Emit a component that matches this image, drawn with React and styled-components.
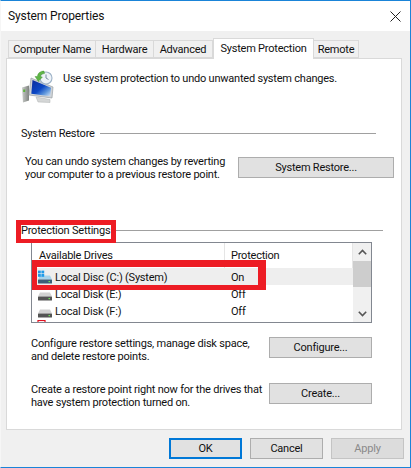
import React from 'react'
import styled, { createGlobalStyle } from 'styled-components'

const Global = createGlobalStyle`
  html, body { margin: 0; padding: 0; background: #fff; }
  * { box-sizing: border-box; }
  body { font-family: Roboto, "Open Sans", "Liberation Sans", sans-serif; font-size: 11px; letter-spacing: -0.22px; color: #111; }
`

const Window = styled.div`
  position: relative;
  width: 411px;
  height: 468px;
  border: 1px solid #1a84d8;
  border-left-color: #f6f6f6;
  display: flex;
  flex-direction: column;
  background: #f0f0f0;
  overflow: hidden;
`

const TitleBar = styled.div`
  height: 30px;
  flex: none;
  background: #fff;
  display: flex;
  align-items: center;
  justify-content: space-between;
  padding: 0 9px 0 7px;
  font-size: 12px;
  letter-spacing: -0.1px;
`

const TabStrip = styled.div`
  display: flex;
  align-items: flex-end;
  height: 27px;
  flex: none;
  padding-left: 7px;
  position: relative;
  z-index: 1;
`

const Tab = styled.div`
  height: ${p => (p.$active ? '21px' : '18px')};
  width: ${p => p.$w}px;
  margin-bottom: ${p => (p.$active ? '-1px' : '0')};
  padding-bottom: ${p => (p.$active ? '2px' : '0')};
  background: ${p => (p.$active ? '#fff' : '#f0f0f0')};
  border: 1px solid #d9d9d9;
  border-bottom: ${p => (p.$active ? 'none' : '1px solid #d9d9d9')};
  border-left-width: ${p => (p.$first || p.$active ? '1px' : '0')};
  display: flex;
  align-items: center;
  justify-content: center;
  white-space: nowrap;
`

const Panel = styled.div`
  width: 396px;
  height: 372px;
  flex: none;
  margin-left: 5px;
  background: #fff;
  border: 1px solid #d9d9d9;
  padding: 11px 0 0 14px;
`

const Intro = styled.div`
  display: flex;
  align-items: flex-start;
  gap: 4px;
  height: 55px;
  margin-left: -4px;
`

const IntroText = styled.div`
  padding-top: 1px;
  line-height: 16px;
`

const Legend = styled.div`
  display: flex;
  align-items: center;
  gap: 5px;
  width: ${p => p.$w}px;
  height: 16px;
  margin-top: ${p => p.$top || 0}px;
  white-space: nowrap;
  &::after {
    content: "";
    flex: 1;
    height: 1px;
    background: #a0a0a0;
  }
`

const ActionRow = styled.div`
  display: flex;
  align-items: flex-start;
  justify-content: space-between;
  width: ${p => p.$w}px;
  margin-top: ${p => p.$top}px;
  padding-left: ${p => p.$pad || 0}px;
`

const Copy = styled.div`
  line-height: 13px;
  margin-top: ${p => p.$top || 0}px;
  white-space: nowrap;
`

const Button = styled.div`
  width: ${p => p.$w || 73}px;
  height: 21px;
  flex: none;
  background-color: #e1e1e1;
  border: 1px solid ${p => (p.$primary ? '#0078d7' : '#adadad')};
  box-shadow: ${p => (p.$primary ? 'inset 0 0 0 1px #0078d7' : 'none')};
  color: ${p => (p.$disabled ? '#8a8a8a' : '#111')};
  display: flex;
  align-items: center;
  justify-content: center;
  white-space: nowrap;
  ${p => p.$disabled && `
    background-color: #dcdcdc;
    border-color: #c4c4c4;
    background-image: radial-gradient(#c6c6c6 0.6px, transparent 0.7px);
    background-size: 4px 4px;
  `}
`

const ListBox = styled.div`
  width: 341px;
  height: 81px;
  margin: 4px 0 0 10px;
  border: 1px solid #828790;
  display: flex;
  overflow: hidden;
  background: #fff;
`

const ListMain = styled.div`
  width: 321px;
  flex: none;
  overflow: hidden;
`

const Row = styled.div`
  display: grid;
  grid-template-columns: 192px 1fr;
  height: 17px;
  padding-top: 1px;
  align-items: center;
  background: ${p => (p.$selected ? '#eeeeee' : 'transparent')};
`

const HeaderRow = styled(Row)`
  height: 25px;
  padding-top: 0;
  align-items: start;
  border-right: 1px solid #e5e5e5;
`

const HeadCell = styled.div`
  height: 16px;
  padding: 5px 0 0 ${p => p.$pad}px;
  line-height: 16px;
  ${p => p.$divider && 'border-left: 1px solid #e5e5e5; height: 25px;'}
`

const DriveCell = styled.div`
  display: flex;
  align-items: center;
  gap: 2px;
  padding-left: 5px;
  white-space: nowrap;
`

const StatusCell = styled.div`
  padding-left: 7px;
`

const Scrollbar = styled.div`
  flex: 1;
  background: #f0f0f0;
  display: flex;
  flex-direction: column;
  align-items: center;
`

const ArrowSlot = styled.div`
  height: 17px;
  width: 100%;
  flex: none;
  display: flex;
  align-items: center;
  justify-content: center;
`

const Thumb = styled.div`
  width: 100%;
  height: 26px;
  margin-top: 1px;
  background: #cdcdcd;
`

const Track = styled.div`
  flex: 1;
`

const Footer = styled.div`
  flex: 1;
  display: flex;
  justify-content: flex-end;
  gap: 8px;
  padding: 8px 6px 0 0;
`

const RedBox = styled.div`
  position: absolute;
  left: ${p => p.$x}px;
  top: ${p => p.$y}px;
  width: ${p => p.$w}px;
  height: ${p => p.$h}px;
  border-style: solid;
  border-color: #ed1c24;
  border-width: ${p => p.$b};
  pointer-events: none;
  z-index: 3;
`

const CloseIcon = () => (
  <svg width="11" height="11" viewBox="0 0 11 11">
    <path d="M0.5 0.5L10.5 10.5M10.5 0.5L0.5 10.5" stroke="#222" strokeWidth="1" fill="none" />
  </svg>
)

const RestoreIcon = () => (
  <svg width="42" height="38" viewBox="0 0 42 38" style={{ flex: 'none', marginTop: -1 }}>
    <defs>
      <linearGradient id="scr" x1="0" y1="0" x2="1" y2="1">
        <stop offset="0" stopColor="#0a2a9c" />
        <stop offset="0.5" stopColor="#0b47c4" />
        <stop offset="0.75" stopColor="#5f97dc" />
        <stop offset="1" stopColor="#dbe9f7" />
      </linearGradient>
      <linearGradient id="tower" x1="0" y1="0" x2="1" y2="0">
        <stop offset="0" stopColor="#c9ccc9" />
        <stop offset="1" stopColor="#7f837f" />
      </linearGradient>
    </defs>
    <path d="M5 18.5L12 16.5V31.5L6 33.5Z" fill="url(#tower)" />
    <rect x="6.2" y="20.5" width="2" height="2.5" fill="#5cb23c" />
    <path d="M19 28L33 30.5V33.5L21 33Z" fill="#d4d6d6" stroke="#aeb2b2" strokeWidth="0.5" />
    <path d="M14 9L36 18L35 29L12 26Z" fill="#cfd2d5" stroke="#9aa0a5" strokeWidth="0.7" />
    <path d="M15.5 11L34 18.7L33.2 27.3L14.3 24.8Z" fill="url(#scr)" />
    <circle cx="29" cy="9" r="6" fill="#eef3f8" stroke="#9db2c7" strokeWidth="1.1" />
    <path d="M29 5.5V9L31.5 10.5" stroke="#6c8198" strokeWidth="0.9" fill="none" />
    <path d="M27 2C23 2 20.8 4.3 20.4 7.5L18 7.5L21.4 12.5L25.4 8L23.2 7.6C23.6 6 25 4.8 27.5 4.6Z" fill="#5fb547" stroke="#3f8f30" strokeWidth="0.4" />
  </svg>
)

const DriveIcon = ({ system, clipped }) => (
  <svg width="16" height="16" viewBox="0 0 16 16" style={{ flex: 'none' }}>
    {clipped ? (
      <rect x="1" y="0.5" width="7" height="8" fill="none" stroke="#e01020" strokeWidth="1.2" />
    ) : (
      <>
        <path d="M3 6.5H13L15 10.5H1Z" fill={system ? '#a8d3ea' : '#d2d2d2'} />
        <rect x="1" y="10.5" width="14" height="4" rx="0.6" fill={system ? '#3b5f78' : '#545454'} />
        <rect x="11.5" y="12" width="1.5" height="1.2" fill="#6fe05a" />
        {system && (
          <g fill="#1f9be8">
            <rect x="1" y="1.6" width="2.8" height="2.8" />
            <rect x="4.4" y="1.6" width="2.8" height="2.8" />
            <rect x="1" y="5" width="2.8" height="2.8" />
            <rect x="4.4" y="5" width="2.8" height="2.8" />
          </g>
        )}
      </>
    )}
  </svg>
)

const Chevron = ({ down }) => (
  <svg width="9" height="6" viewBox="0 0 9 6">
    <path d={down ? 'M0.8 0.8L4.5 4.5L8.2 0.8' : 'M0.8 5.2L4.5 1.5L8.2 5.2'} stroke="#555" strokeWidth="1.6" fill="none" />
  </svg>
)

const tabs = [
  { label: 'Computer Name', w: 88, first: true },
  { label: 'Hardware', w: 58 },
  { label: 'Advanced', w: 59 },
  { label: 'System Protection', w: 101, active: true },
  { label: 'Remote', w: 45 },
]

const drives = [
  { name: 'Local Disc (C:) (System)', status: 'On', system: true, selected: true },
  { name: 'Local Disk (E:)', status: 'Off' },
  { name: 'Local Disk (F:)', status: 'Off' },
]

export default function App() {
  return (
    <>
      <Global />
      <Window>
        <TitleBar>
          <span>System Properties</span>
          <CloseIcon />
        </TitleBar>
        <TabStrip>
          {tabs.map(t => (
            <Tab key={t.label} $w={t.w} $active={t.active} $first={t.first}>{t.label}</Tab>
          ))}
        </TabStrip>
        <Panel>
          <Intro>
            <RestoreIcon />
            <IntroText>Use system protection to undo unwanted system changes.</IntroText>
          </Intro>
          <Legend $w={355}>System Restore</Legend>
          <ActionRow $w={373} $top={16} $pad={4}>
            <Copy $top={-2}>You can undo system changes by reverting<br />your computer to a previous restore point.</Copy>
            <Button $w={156}>System Restore...</Button>
          </ActionRow>
          <Legend $w={362} $top={41}>Protection Settings</Legend>
          <ListBox>
            <ListMain>
              <HeaderRow>
                <HeadCell $pad={7}>Available Drives</HeadCell>
                <HeadCell $pad={6} $divider>Protection</HeadCell>
              </HeaderRow>
              {drives.map(d => (
                <Row key={d.name} $selected={d.selected}>
                  <DriveCell><DriveIcon system={d.system} /><span>{d.name}</span></DriveCell>
                  <StatusCell>{d.status}</StatusCell>
                </Row>
              ))}
              <Row><DriveCell><DriveIcon clipped /></DriveCell></Row>
            </ListMain>
            <Scrollbar>
              <ArrowSlot><Chevron /></ArrowSlot>
              <Thumb />
              <Track />
              <ArrowSlot><Chevron down /></ArrowSlot>
            </Scrollbar>
          </ListBox>
          <ActionRow $w={351} $top={14} $pad={10}>
            <Copy>Configure restore settings, manage disk space,<br />and delete restore points.</Copy>
            <Button $w={103}>Configure...</Button>
          </ActionRow>
          <ActionRow $w={351} $top={20} $pad={10}>
            <Copy>Create a restore point right now for the drives that<br />have system protection turned on.</Copy>
            <Button $w={103}>Create...</Button>
          </ActionRow>
        </Panel>
        <Footer>
          <Button $primary>OK</Button>
          <Button>Cancel</Button>
          <Button $disabled>Apply</Button>
        </Footer>
        <RedBox $x={15} $y={219} $w={100} $h={23} $b="5px 5px 4px 5px" />
        <RedBox $x={31} $y={259} $w={234} $h={30} $b="7px 8px 5px 5px" />
      </Window>
    </>
  )
}
